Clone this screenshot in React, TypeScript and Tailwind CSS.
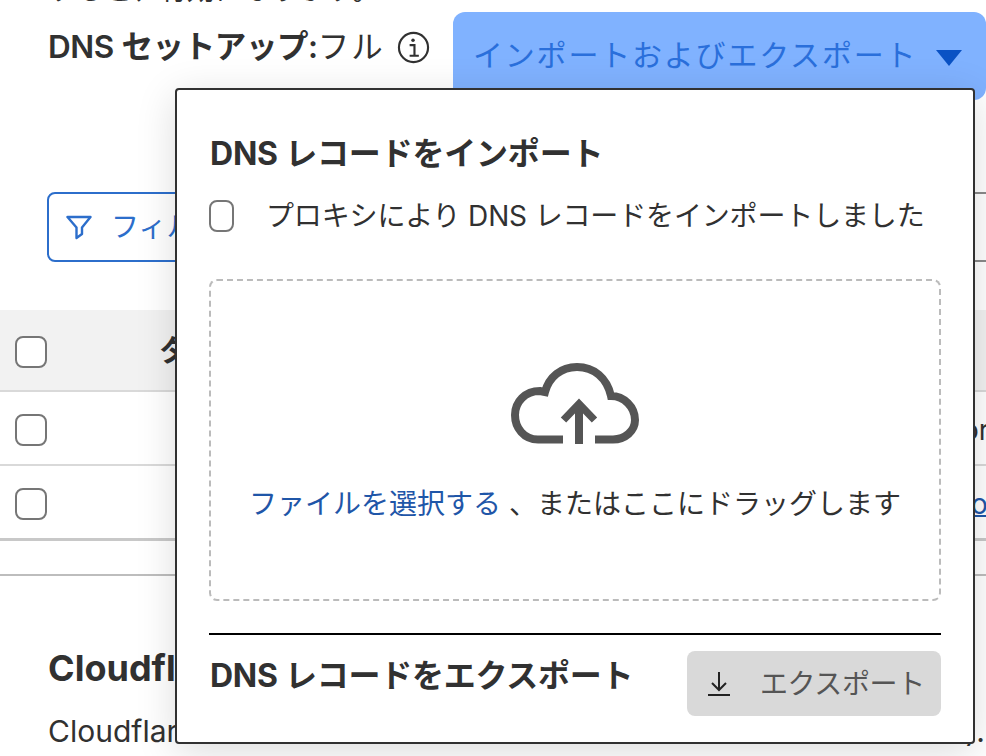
import React from "react";

function Check({ className = "w-[32px] h-[32px]" }: { className?: string }) {
  return <div className={"shrink-0 rounded-[8px] border-2 border-[#767676] bg-white " + className} />;
}

function Row({ children, border }: { children?: React.ReactNode; border: string }) {
  return (
    <div className={"relative flex items-center pl-[15px] " + border}>
      <Check />
      {children}
    </div>
  );
}

function CloudIcon() {
  return (
    <svg width="128" height="81" viewBox="0 0 128 81" fill="none" stroke="#555555" strokeWidth="8">
      <path d="M52 76.5H27C13 76.500 4 65 4 52C4 39 14 28 29 28L34 29C38 14 50 4 66 4C83 4 96 15 100 33C113 33 124 44 124 57C124 68 114 76.500 102 76.500H84" />
      <path d="M68 81V44" />
      <path d="M52.500 57L68 41L83.500 57" strokeWidth="7.500" />
    </svg>
  );
}

export default function App() {
  return (
    <div className="relative h-[756px] w-[986px] overflow-hidden bg-white text-[#313131] font-[family-name:Inter,'Noto_Sans_CJK_JP',sans-serif]">
      <div className="-mt-[30px] h-[40px] pl-[48px] text-[28px] leading-[40px]">すると、有効になります。</div>

      <div className="mt-[2px] flex h-[88px] items-start">
        <div className="flex h-[70px] w-[453px] shrink-0 items-center pl-[48px] text-[31.500px]">
          <span className="font-semibold tracking-[-0.4px]">DNS セットアップ:</span>
          <span className="tracking-[2px]">フル</span>
          <svg className="ml-[12px]" width="33" height="33" viewBox="0 0 34 34" fill="none" stroke="#313131">
            <circle cx="17" cy="17" r="15" strokeWidth="2.200" />
            <path d="M13 14.500H18V25M13 25.500H22.500" strokeWidth="2.200" />
            <circle cx="16.500" cy="9.500" r="1.800" fill="#313131" stroke="none" />
          </svg>
        </div>
        <div className="flex h-[88px] flex-1 items-start justify-between rounded-[12px] bg-[#80b2ff] pl-[20px] pr-[24px] pt-[22px] text-[30px] leading-[42px] text-[#2a6fdb]">
          <span className="tracking-[1.8px]">インポートおよびエクスポート</span>
          <svg className="mt-[16px]" width="26" height="16" viewBox="0 0 26 16">
            <path d="M0 0H26L13 16Z" fill="#0a52c4" />
          </svg>
        </div>
      </div>

      <div className="mt-[92px] flex h-[70px] items-stretch justify-between">
        <div className="ml-[47px] flex w-[260px] items-center rounded-[8px] border-2 border-[#2c6ecb] pl-[17px] text-[28px] text-[#2c6ecb]">
          <svg width="26" height="25" viewBox="0 0 26 25" fill="none" stroke="#2c6ecb" strokeWidth="2.400" strokeLinejoin="round">
            <path d="M1.500 2H24.500L16 12.500V19L10.500 23V12.500Z" />
          </svg>
          <span className="ml-[19px]">フィルター</span>
        </div>
        <div className="w-[100px] border-y-2 border-[#8a8a8a]" />
      </div>

      <div className="mt-[48px]">
        <Row border="h-[82px] pt-[4px] bg-[#f2f2f2] border-b-2 border-[#d9d9d9]">
          <span className="mb-[4px] ml-[112px] text-[30px] font-semibold">タイプ</span>
        </Row>
        <Row border="h-[74px] pt-[3px] border-b-2 border-[#d9d9d9]">
          <span className="absolute left-[962px] whitespace-nowrap text-[28px]">or</span>
        </Row>
        <Row border="h-[75px] pt-[3px] border-b-[3px] border-[#c8c8c8]">
          <span className="absolute left-[971px] whitespace-nowrap text-[28px] text-[#1f56a8] underline decoration-2">op</span>
        </Row>
      </div>

      <div className="mt-[33px] border-t-2 border-[#bdbdbd] pl-[48px]">
        <h2 className="mt-[70px] whitespace-nowrap text-[36px] font-bold leading-[44px]">Cloudflare ネームサーバー</h2>
        <div className="mt-[21px] flex justify-between pr-[1px] text-[30px] leading-[40px]">
          <span className="whitespace-nowrap">Cloudflare</span>
          <span>).</span>
        </div>
      </div>

      <div className="absolute left-[175px] top-[88px] h-[656px] w-[800px] rounded-[4px] border-2 border-[#313131] bg-white px-[32px] pt-[39px] shadow-[0_8px_40px_rgba(0,0,0,0.14)]">
        <h3 className="pl-[1px] text-[32px] font-bold leading-[50px] tracking-[-0.2px]">DNS レコードをインポート</h3>
        <div className="mt-[21px] flex h-[32px] items-center">
          <Check className="h-[32px] w-[25px]" />
          <span className="ml-[32px] whitespace-nowrap text-[28px] tracking-[-0.15px]">プロキシにより DNS レコードをインポートしました</span>
        </div>
        <div className="mt-[47px] flex h-[322px] flex-col items-center rounded-[8px] border-2 border-dashed border-[#bbbbbb] pt-[82px]">
          <CloudIcon />
          <p className="mt-[40px] whitespace-nowrap text-[28px] leading-[40px]">
            <span className="text-[#1f56a8]">ファイルを選択する</span> 、またはここにドラッグします
          </p>
        </div>
        <div className="mt-[32px] h-[2px] bg-black" />
        <div className="mt-[16px] flex items-start justify-between">
          <h3 className="mt-[1px] pl-[1px] text-[32px] font-bold leading-[48px] tracking-[-0.25px]">DNS レコードをエクスポート</h3>
          <div className="flex h-[65px] w-[254px] items-center rounded-[8px] bg-[#d9d9d9] pl-[21px] text-[28px] text-[#555555]">
            <svg width="22" height="25" viewBox="0 0 22 25" fill="none" stroke="#222222" strokeWidth="2">
              <path d="M11 1V18M4 12L11 19L18 12" />
              <path d="M0 24H22" />
            </svg>
            <span className="ml-[30px] tracking-[-0.4px]">エクスポート</span>
          </div>
        </div>
      </div>
    </div>
  );
}
